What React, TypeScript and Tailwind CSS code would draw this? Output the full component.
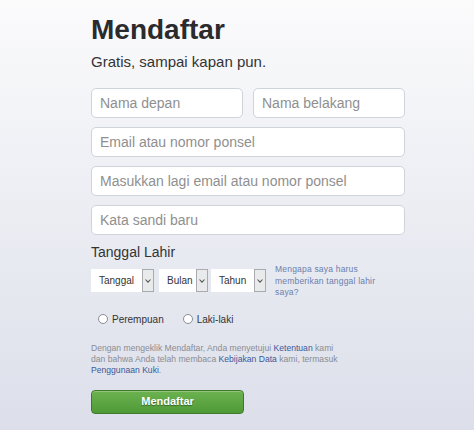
import React from 'react';

function Field({ placeholder, className = '' }: { placeholder: string; className?: string }) {
  return (
    <input
      type="text"
      placeholder={placeholder}
      className={`h-[30px] rounded-[5px] border border-[#cfd3da] bg-white px-[8px] text-[14px] text-[#333] placeholder:text-[#8f8f8f] outline-none ${className}`}
    />
  );
}

function Select({ label, width }: { label: string; width: string }) {
  return (
    <div className={`flex h-[23px] ${width} bg-white`}>
      <div className="flex flex-1 items-center pl-[8px] text-[10px] text-[#333]">{label}</div>
      <div className="flex w-[12px] items-center justify-center border border-[#a9abb0] bg-[#e9eaec]">
        <svg width="6" height="4" viewBox="0 0 6 4" fill="none">
          <path d="M0.5 0.5 L3 3.2 L5.5 0.5" stroke="#555" strokeWidth="1.1" />
        </svg>
      </div>
    </div>
  );
}

function Radio({ label }: { label: string }) {
  return (
    <label className="flex items-center gap-[4px] text-[10px] text-[#333]">
      <span className="h-[10px] w-[10px] rounded-full border border-[#8a8d93] bg-white" />
      {label}
    </label>
  );
}

export default function App() {
  return (
    <div className="h-[430px] w-[474px] overflow-hidden bg-gradient-to-b from-[#fbfbfc] to-[#dcdfea] font-['Liberation_Sans',Arial,sans-serif]">
      <div className="ml-[91px] w-[314px] pt-[14px]">
        <h1 className="text-[28px] font-bold leading-[32px] text-[#2b2b2e]">Mendaftar</h1>
        <p className="mt-[6px] text-[15px] leading-[20px] text-[#333]">Gratis, sampai kapan pun.</p>

        {/* Form fields */}
        <div className="mt-[16px] flex flex-col gap-[9px]">
          <div className="flex gap-[10px]">
            <Field placeholder="Nama depan" className="w-[152px]" />
            <Field placeholder="Nama belakang" className="w-[152px]" />
          </div>
          <Field placeholder="Email atau nomor ponsel" className="w-full" />
          <Field placeholder="Masukkan lagi email atau nomor ponsel" className="w-full" />
          <Field placeholder="Kata sandi baru" className="w-full" />
        </div>

        <h2 className="mt-[8px] text-[14px] leading-[18px] text-[#333]">Tanggal Lahir</h2>
        <div className="mt-[8px] flex items-start">
          <Select label="Tanggal" width="w-[63px]" />
          <div className="ml-[5px]">
            <Select label="Bulan" width="w-[49px]" />
          </div>
          <div className="ml-[3px]">
            <Select label="Tahun" width="w-[55px]" />
          </div>
          <a className="-mt-[5px] ml-[9px] text-[8.5px] leading-[11.5px] tracking-[0.2px] text-[#6a7fae]">
            Mengapa saya harus
            <br />
            memberikan tanggal lahir
            <br />
            saya?
          </a>
        </div>

        <div className="mt-[13px] flex gap-[19px] pl-[7px]">
          <Radio label="Perempuan" />
          <Radio label="Laki-laki" />
        </div>

        <p className="mt-[16px] whitespace-nowrap text-[8.6px] leading-[11px] text-[#8a8d93]">
          Dengan mengeklik Mendaftar, Anda menyetujui <span className="text-[#3b5998]">Ketentuan</span> kami
          <br />
          dan bahwa Anda telah membaca <span className="text-[#3b5998]">Kebijakan Data</span> kami, termasuk
          <br />
          <span className="text-[#3b5998]">Penggunaan Kuki</span>.
        </p>

        <button className="mt-[14px] flex h-[24px] w-[153px] items-center justify-center rounded-[4px] border border-[#3d7a2a] bg-gradient-to-b from-[#6cb250] to-[#4f9a37] text-[11px] font-bold text-white shadow-[inset_0_1px_0_rgba(255,255,255,0.25)] [text-shadow:0_1px_1px_rgba(0,0,0,0.4)]">
          Mendaftar
        </button>
      </div>
    </div>
  );
}
